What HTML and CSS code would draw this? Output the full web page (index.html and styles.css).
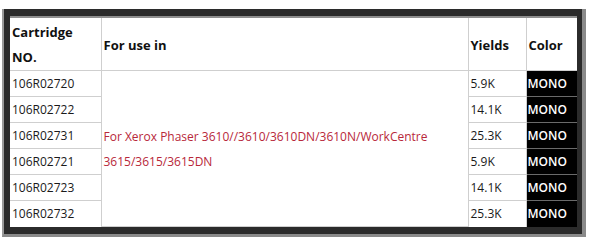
FILE: index.html
```html
<!DOCTYPE html>
<html lang="en">
  <head>
    <meta charset="UTF-8" />
    <meta name="viewport" content="width=device-width, initial-scale=1.0" />
    <title>Cartridge Table</title>
    <link rel="stylesheet" href="styles.css">
  </head>
  <body>
    <div class="frame">
      <div class="box">
        <table class="spec">
          <colgroup>
            <col class="c-no" />
            <col class="c-use" />
            <col class="c-yield" />
            <col class="c-color" />
          </colgroup>
          <tr class="head">
            <th>Cartridge<br />NO.</th>
            <th>For use in</th>
            <th>Yields</th>
            <th>Color</th>
          </tr>
          <tr>
            <td>106R02720</td>
            <td class="use" rowspan="6">For Xerox Phaser 3610//3610/3610DN/3610N/WorkCentre 3615/3615/3615DN</td>
            <td>5.9K</td>
            <td class="mono">MONO</td>
          </tr>
          <tr>
            <td>106R02722</td>
            <td>14.1K</td>
            <td class="mono">MONO</td>
          </tr>
          <tr>
            <td>106R02731</td>
            <td>25.3K</td>
            <td class="mono">MONO</td>
          </tr>
          <tr>
            <td>106R02721</td>
            <td>5.9K</td>
            <td class="mono">MONO</td>
          </tr>
          <tr>
            <td>106R02723</td>
            <td>14.1K</td>
            <td class="mono">MONO</td>
          </tr>
          <tr>
            <td>106R02732</td>
            <td>25.3K</td>
            <td class="mono">MONO</td>
          </tr>
        </table>
      </div>
    </div>
  </body>
</html>
```

FILE: styles.css
```css
body {
  margin: 0;
  padding: 9px 0 0 2px;
  background-color: #fff;
  font-family: "Open Sans", sans-serif;
}

.frame {
  width: 584px;
  border-left: 2px solid #9a9a9a;
  border-right: 4px solid #8a8a8a;
  border-bottom: 3px solid #8a8a8a;
  box-sizing: border-box;
}

.box {
  background-color: #2b2b2b;
  padding: 7px 7px 7px 6px;
}

.spec {
  width: 567px;
  border-collapse: collapse;
  table-layout: fixed;
  background-color: #fff;
  border-top: 2px solid #8e8e8e;
  font-size: 12px;
  color: #1a1a1a;
}

.c-no {
  width: 91px;
}

.c-use {
  width: 367px;
}

.c-yield {
  width: 58px;
}

.c-color {
  width: 51px;
}

.spec th,
.spec td {
  border: 1px solid #cfcfcf;
  padding: 0 0 0 2px;
  text-align: left;
  vertical-align: middle;
  line-height: 25px;
  white-space: nowrap;
}

.spec tr {
  height: 26px;
}

.spec .head {
  height: 53px;
}

.spec .head th {
  padding-top: 2px;
}

.spec th {
  font-size: 13px;
  font-weight: bold;
  color: #111;
}

.spec td.use {
  white-space: normal;
  color: #b8283a;
  padding-top: 1px;
}

.spec td.mono {
  background-color: #000;
  color: #fff;
  font-weight: 600;
  padding-left: 1px;
  border-color: #6a6a6a;
}

.spec th:first-child,
.spec td:first-child {
  border-left: none;
}

.spec th:last-child,
.spec td:last-child {
  border-right: none;
}

.spec tr:last-child td {
  border-bottom: none;
}
```
